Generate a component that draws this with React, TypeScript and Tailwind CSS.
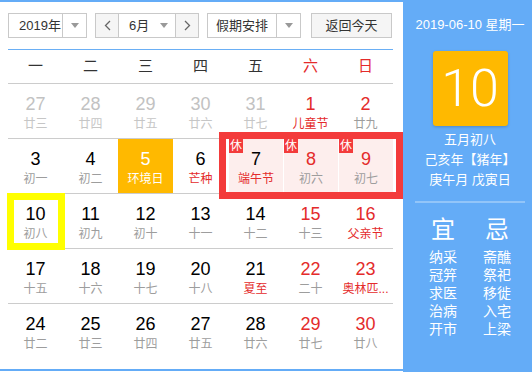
import React from 'react'

type Day = {
  n: number
  sub: string
  other?: boolean
  redNum?: boolean
  redSub?: boolean
  rest?: boolean
  env?: boolean
  today?: boolean
}

const weekdays = ['一', '二', '三', '四', '五', '六', '日']

const rows: Day[][] = [
  [
    { n: 27, sub: '廿三', other: true },
    { n: 28, sub: '廿四', other: true },
    { n: 29, sub: '廿五', other: true },
    { n: 30, sub: '廿六', other: true },
    { n: 31, sub: '廿七', other: true },
    { n: 1, sub: '儿童节', redNum: true, redSub: true },
    { n: 2, sub: '廿九', redNum: true },
  ],
  [
    { n: 3, sub: '初一' },
    { n: 4, sub: '初二' },
    { n: 5, sub: '环境日', env: true },
    { n: 6, sub: '芒种', redSub: true },
    { n: 7, sub: '端午节', redSub: true, rest: true },
    { n: 8, sub: '初六', redNum: true, rest: true },
    { n: 9, sub: '初七', redNum: true, rest: true },
  ],
  [
    { n: 10, sub: '初八', today: true },
    { n: 11, sub: '初九' },
    { n: 12, sub: '初十' },
    { n: 13, sub: '十一' },
    { n: 14, sub: '十二' },
    { n: 15, sub: '十三', redNum: true },
    { n: 16, sub: '父亲节', redNum: true, redSub: true },
  ],
  [
    { n: 17, sub: '十五' },
    { n: 18, sub: '十六' },
    { n: 19, sub: '十七' },
    { n: 20, sub: '十八' },
    { n: 21, sub: '夏至', redSub: true },
    { n: 22, sub: '二十', redNum: true },
    { n: 23, sub: '奥林匹...', redNum: true, redSub: true },
  ],
  [
    { n: 24, sub: '廿二' },
    { n: 25, sub: '廿三' },
    { n: 26, sub: '廿四' },
    { n: 27, sub: '廿五' },
    { n: 28, sub: '廿六' },
    { n: 29, sub: '廿七', redNum: true },
    { n: 30, sub: '廿八', redNum: true },
  ],
]

const yi = ['纳采', '冠笄', '求医', '治病', '开市']
const ji = ['斋醮', '祭祀', '移徙', '入宅', '上梁']

function Caret() {
  return <span className="w-0 h-0 border-x-[4px] border-x-transparent border-t-[5px] border-t-[#999]" />
}

function Chevron({ dir }: { dir: 'left' | 'right' }) {
  return (
    <svg width="7" height="11" viewBox="0 0 7 11" fill="none">
      <path
        d={dir === 'left' ? 'M6 1 L1.5 5.5 L6 10' : 'M1 1 L5.5 5.5 L1 10'}
        stroke="#666"
        strokeWidth="1.3"
      />
    </svg>
  )
}

function Cell({ d }: { d: Day }) {
  let numColor = 'text-black'
  if (d.other) numColor = 'text-[#c2c2c2]'
  else if (d.env) numColor = 'text-white'
  else if (d.redNum) numColor = 'text-[#e42b2b]'

  let subColor = 'text-[#9d9d9d]'
  if (d.other) subColor = 'text-[#c6c6c6]'
  else if (d.env) subColor = 'text-white'
  else if (d.redSub) subColor = 'text-[#e42b2b]'

  const bg = d.env ? 'bg-[#ffb900]' : d.rest ? 'bg-[#fdeeed] border-l border-white' : ''

  return (
    <div className={`relative h-[54px] flex flex-col items-center pt-[9px] ${bg}`}>
      {d.rest && (
        <span className="absolute left-0 top-0 w-[14px] h-[14px] bg-[#f33b3b] text-white text-[12px] leading-[14px] text-center">
          休
        </span>
      )}
      {d.today && (
        <div className="absolute -left-px -top-px w-[58px] h-[57px] border-[7px] border-[#ffff00] z-10" />
      )}
      <div className={`text-[18px] leading-[22px] ${numColor}`}>{d.n}</div>
      <div className={`mt-px text-[12px] leading-[16px] whitespace-nowrap ${subColor}`}>{d.sub}</div>
    </div>
  )
}

export default function App() {
  return (
    <div className="flex w-[532px] h-[372px] bg-white [font-family:'Liberation_Sans','Noto_Sans_CJK_SC',sans-serif]">
      <div className="w-[403px] h-[371px] border-t-2 border-b-2 border-[#64acf7] pl-2 pr-[10px]">
        <div className="mt-[11px] h-[25px] flex text-[13px] text-[#333]">
          <div className="w-[79px] flex border border-[#c9c9c9]">
            <div className="flex-1 flex items-center pl-[10px]">2019年</div>
            <div className="w-[24px] flex items-center justify-center border-l border-[#c9c9c9]">
              <Caret />
            </div>
          </div>
          <div className="ml-2 w-[104px] flex border border-[#c9c9c9]">
            <div className="w-[22px] flex items-center justify-center bg-[#f5f5f5]">
              <Chevron dir="left" />
            </div>
            <div className="flex-1 flex items-center justify-between pl-[10px] pr-[7px] border-x border-[#c9c9c9]">
              <span>6月</span>
              <Caret />
            </div>
            <div className="w-[22px] flex items-center justify-center bg-[#f5f5f5]">
              <Chevron dir="right" />
            </div>
          </div>
          <div className="ml-2 w-[94px] flex border border-[#c9c9c9]">
            <div className="flex-1 flex items-center justify-center">假期安排</div>
            <div className="w-[24px] flex items-center justify-center border-l border-[#c9c9c9]">
              <Caret />
            </div>
          </div>
          <button className="ml-[10px] w-[81px] border border-[#c9c9c9] bg-[#f5f5f5] flex items-center justify-center">
            返回今天
          </button>
        </div>

        <div className="mt-[11px] h-px bg-[#6aaff5]" />

        <div className="grid grid-cols-7 h-[33px] items-center text-[15px]">
          {weekdays.map((w, i) => (
            <div key={w} className={`text-center ${i >= 5 ? 'text-[#e42b2b]' : 'text-[#333]'}`}>
              {w}
            </div>
          ))}
        </div>

        {rows.map((row, ri) => (
          <div key={ri} className={`relative grid grid-cols-7 ${ri === 0 || ri > 0 ? 'border-t border-[#cccccc]' : ''}`}>
            {row.map((d) => (
              <Cell key={`${ri}-${d.n}`} d={d} />
            ))}
            {ri === 1 && (
              <div className="absolute left-[211px] top-[-7px] w-[184px] h-[67px] border-[7px] border-[#f33b3b] z-20 pointer-events-none" />
            )}
          </div>
        ))}
      </div>

      <div className="flex-1 h-[372px] bg-[#64acf7] text-white flex flex-col items-center pl-[5px]">
        <div className="mt-4 text-[13px] leading-[18px] whitespace-nowrap">2019-06-10 星期一</div>
        <div className="mt-[17px] w-[75px] h-[75px] rounded-[3px] bg-[#ffb900] shadow-[0_1px_3px_rgba(0,0,0,0.2)] flex items-center justify-center">
          <span className="text-[52px] leading-none font-light [font-family:Roboto,'Liberation_Sans',sans-serif]">10</span>
        </div>
        <div className="mt-1 text-[13px] leading-[20px] text-center">
          <div>五月初八</div>
          <div>己亥年【猪年】</div>
          <div>庚午月 戊寅日</div>
        </div>
        <div className="mt-[11px] w-[110px] h-[2px] bg-[#92c5f9]" />
        <div className="mt-3 flex">
          <div className="w-[54px] flex flex-col items-center">
            <div className="text-[24px] leading-[30px]">宜</div>
            <div className="mt-[3px] text-[14px] leading-[18px] text-center">
              {yi.map((t) => (
                <div key={t}>{t}</div>
              ))}
            </div>
          </div>
          <div className="w-[54px] flex flex-col items-center">
            <div className="text-[24px] leading-[30px]">忌</div>
            <div className="mt-[3px] text-[14px] leading-[18px] text-center">
              {ji.map((t) => (
                <div key={t}>{t}</div>
              ))}
            </div>
          </div>
        </div>
      </div>
    </div>
  )
}
